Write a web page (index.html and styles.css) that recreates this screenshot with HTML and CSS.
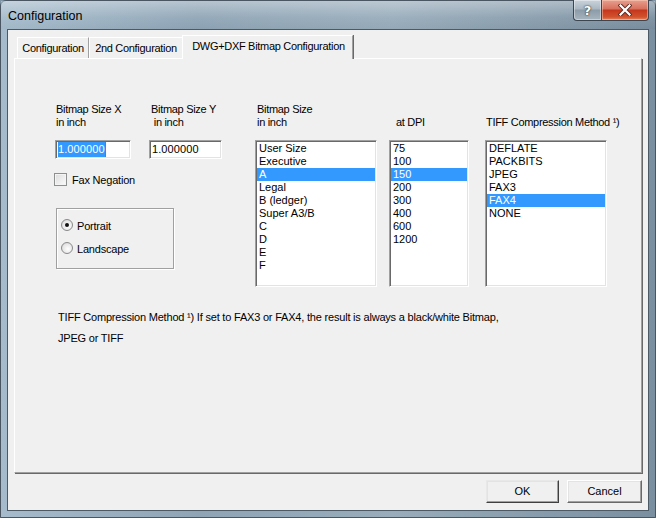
FILE: index.html
```html
<!DOCTYPE html>
<html>
<head>
<meta charset="utf-8">
<link rel="stylesheet" href="styles.css">
</head>
<body>
<div class="window">
  <div class="titlebar">
    <span class="title">Configuration</span>
    <div class="caption-btns">
      <div class="cbtn help">?</div>
      <div class="cbtn close">
        <svg width="14" height="12" viewBox="0 0 14 12">
          <path d="M2.5 1.5 L11.5 10.5 M11.5 1.5 L2.5 10.5" stroke="#5a2a22" stroke-width="4" stroke-linecap="square" fill="none"/>
          <path d="M2.5 1.5 L11.5 10.5 M11.5 1.5 L2.5 10.5" stroke="#ffffff" stroke-width="2.2" stroke-linecap="square" fill="none"/>
        </svg>
      </div>
    </div>
  </div>
  <div class="frame">
    <div class="client">
      <div class="tabs">
        <div class="tab t1">Configuration</div>
        <div class="tab t2">2nd Configuration</div>
        <div class="tab active">DWG+DXF Bitmap Configuration</div>
      </div>
      <div class="panel">
        <div class="panel-top">
          <div class="left">
            <div class="fields">
              <div class="field fx">
                <div class="hdr">Bitmap Size X<br>in inch</div>
                <div class="input"><span class="seltext">1.000000</span><span class="caret"></span></div>
              </div>
              <div class="field fy">
                <div class="hdr">Bitmap Size Y<br>&nbsp;in inch</div>
                <div class="input">1.000000</div>
              </div>
            </div>
            <div class="check-row">
              <span class="checkbox"></span>
              <span class="check-label">Fax Negation</span>
            </div>
            <div class="group">
              <div class="radio-row"><span class="radio checked"></span><span>Portrait</span></div>
              <div class="radio-row"><span class="radio"></span><span>Landscape</span></div>
            </div>
          </div>
          <div class="lists">
            <div class="lcol lc1">
              <div class="hdr lh1">Bitmap Size<br>in inch</div>
              <div class="listbox">
                <div class="item">User Size</div>
                <div class="item">Executive</div>
                <div class="item selected">A</div>
                <div class="item">Legal</div>
                <div class="item">B (ledger)</div>
                <div class="item">Super A3/B</div>
                <div class="item">C</div>
                <div class="item">D</div>
                <div class="item">E</div>
                <div class="item">F</div>
              </div>
            </div>
            <div class="lcol lc2">
              <div class="hdr lh2">at DPI</div>
              <div class="listbox">
                <div class="item">75</div>
                <div class="item">100</div>
                <div class="item selected">150</div>
                <div class="item">200</div>
                <div class="item">300</div>
                <div class="item">400</div>
                <div class="item">600</div>
                <div class="item">1200</div>
              </div>
            </div>
            <div class="lcol lc3">
              <div class="hdr lh3">TIFF Compression Method ¹)</div>
              <div class="listbox">
                <div class="item">DEFLATE</div>
                <div class="item">PACKBITS</div>
                <div class="item">JPEG</div>
                <div class="item">FAX3</div>
                <div class="item selected">FAX4</div>
                <div class="item">NONE</div>
              </div>
            </div>
          </div>
        </div>
        <p class="note">TIFF Compression Method ¹) If set to FAX3 or FAX4, the result is always a black/white Bitmap,<br>JPEG or TIFF</p>
      </div>
      <div class="buttons">
        <div class="btn ok">OK</div>
        <div class="btn cancel">Cancel</div>
      </div>
    </div>
  </div>
</div>
</body>
</html>
```
FILE: styles.css
```css
* { box-sizing: border-box; }
html, body { margin: 0; padding: 0; }
body {
  width: 656px;
  height: 518px;
  overflow: hidden;
  font-family: "Liberation Sans", Arial, sans-serif;
  font-size: 11px;
  color: #000;
  background: #7f95a6;
}
.window {
  width: 656px;
  height: 518px;
  display: flex;
  flex-direction: column;
  background: linear-gradient(to right, #a6bccc 0%, #8fa5b6 30%, #98acbb 60%, #7a8fa0 100%);
  border: 1px solid #4a5763;
  border-radius: 6px 6px 0 0;
}
.titlebar {
  height: 28px;
  display: flex;
  align-items: flex-start;
  justify-content: space-between;
  background: linear-gradient(to bottom, rgba(255,255,255,0.35), rgba(255,255,255,0.05) 60%, rgba(0,0,0,0.02));
}
.title {
  margin: 7px 0 0 7px;
  font-size: 12.5px;
  line-height: 16px;
  color: #000;
}
.caption-btns {
  display: flex;
  margin-right: 6px;
  margin-top: -1px;
}
.cbtn {
  height: 21px;
  display: flex;
  align-items: center;
  justify-content: center;
  border: 1px solid #3b4650;
  border-top: none;
}
.help {
  width: 28px;
  border-radius: 0 0 0 4px;
  border-right: none;
  background: linear-gradient(to bottom, #c9d3dc 0%, #aab7c2 45%, #8c9ba8 50%, #a7b5c0 100%);
  color: #fff;
  font-family: "DejaVu Sans", sans-serif;
  font-weight: bold;
  font-size: 13px;
  text-shadow: 0 0 2px #333, 0 0 1px #333;
  box-shadow: inset 0 0 0 1px rgba(255,255,255,0.4);
}
.close {
  width: 48px;
  border-radius: 0 0 4px 0;
  background: linear-gradient(to bottom, #e8a090 0%, #d7705c 45%, #c4361c 50%, #d2522e 85%, #e4865f 100%);
  box-shadow: inset 0 0 0 1px rgba(255,220,200,0.45);
}
.frame {
  flex: 1;
  padding: 0 6px 6px 6px;
  display: flex;
}
.client {
  width: 642px;
  height: 482px;
  background: #f0f0f0;
  border: 1px solid #4c5a66;
  padding: 5px 6px 0 6px;
  display: flex;
  flex-direction: column;
}
.tabs {
  display: flex;
  align-items: flex-end;
  height: 23px;
  padding-left: 3px;
  position: relative;
  z-index: 2;
}
.tab {
  height: 21px;
  line-height: 19px;
  text-align: center;
  letter-spacing: -0.3px;
  background: #f0f0f0;
  border-top: 1px solid #fff;
  border-left: 1px solid #fff;
  border-right: 1px solid #a0a0a0;
  box-shadow: 1px 0 0 #696969;
  padding-top: 1px;
}
.t1 { width: 72px; }
.t2 { width: 94px; }
.active {
  width: 171px;
  height: 24px;
  margin-left: -1px;
  margin-bottom: -1px;
  line-height: 20px;
  padding-top: 0;
  padding-left: 2px;
  position: relative;
  z-index: 3;
}
.panel {
  height: 415px;
  border-top: 1px solid #fff;
  border-left: 1px solid #fff;
  border-right: 1px solid #a0a0a0;
  border-bottom: 1px solid #a0a0a0;
  box-shadow: 1px 1px 0 #696969;
  padding: 44px 0 0 40px;
  position: relative;
  z-index: 1;
}
.panel-top {
  display: flex;
  align-items: flex-start;
}
.left {
  width: 167px;
  display: flex;
  flex-direction: column;
}
.fields {
  display: flex;
  gap: 18px;
}
.fx { width: 76px; }
.fy { width: 73px; }
.hdr {
  height: 37px;
  line-height: 13px;
  letter-spacing: -0.3px;
  white-space: nowrap;
}
.fx .hdr { padding-left: 1px; }
.fy .hdr { padding-left: 2px; }
.input {
  height: 19px;
  background: #fff;
  border: 1px solid;
  border-color: #a0a0a0 #fff #fff #a0a0a0;
  box-shadow: inset 1px 1px 0 #696969, inset -1px -1px 0 #e3e3e3;
  padding: 2px 0 0 2px;
  line-height: 13px;
  letter-spacing: 0.1px;
  display: flex;
  align-items: flex-start;
}
.seltext {
  background: #3399ff;
  color: #fff;
  line-height: 15px;
  margin-top: -1px;
}
.caret {
  width: 1px;
  height: 15px;
  margin-top: -1px;
  background: #cc6600;
}
.check-row {
  display: flex;
  align-items: center;
  height: 14px;
  margin-top: 13px;
  margin-left: -1px;
}
.checkbox {
  width: 13px;
  height: 13px;
  border: 1px solid #8e8f8f;
  background: linear-gradient(135deg, #dcdcdc, #fbfbfb);
  box-shadow: inset 0 0 0 1px #f4f4f4;
}
.check-label {
  margin-left: 5px;
  padding-top: 2px;
  letter-spacing: -0.2px;
}
.group {
  width: 118px;
  height: 61px;
  margin-top: 22px;
  margin-left: 1px;
  border: 1px solid #a0a0a0;
  box-shadow: 1px 1px 0 #fff, inset 1px 1px 0 #fff;
  padding: 10px 0 0 4px;
  display: flex;
  flex-direction: column;
  gap: 11px;
}
.radio-row {
  display: flex;
  align-items: center;
  height: 12px;
  letter-spacing: -0.2px;
}
.radio-row span:last-child { margin-left: 4px; padding-top: 1px; }
.radio {
  width: 12px;
  height: 12px;
  border-radius: 50%;
  border: 1px solid #8a8a8a;
  background: radial-gradient(circle at 60% 60%, #ffffff 0%, #e6e6e6 60%, #c8c8c8 100%);
  position: relative;
}
.radio.checked::after {
  content: "";
  position: absolute;
  left: 3px;
  top: 3px;
  width: 4px;
  height: 4px;
  border-radius: 50%;
  background: #111;
}
.lists {
  display: flex;
  margin-left: 33px;
}
.lc1 { width: 122px; }
.lc2 { width: 80px; margin-left: 12px; }
.lc3 { width: 122px; margin-left: 16px; }
.lh1 { padding-left: 2px; }
.lh2 { padding: 13px 0 0 7px; }
.lh3 { padding: 13px 0 0 1px; }
.listbox {
  height: 147px;
  background: #fff;
  border: 1px solid;
  border-color: #a0a0a0 #fff #fff #a0a0a0;
  box-shadow: inset 1px 1px 0 #696969, inset -1px -1px 0 #e3e3e3;
  padding: 1px 1px 1px 1px;
}
.item {
  height: 13px;
  line-height: 13px;
  padding-left: 2px;
  white-space: nowrap;
}
.item.selected {
  background: #3399ff;
  color: #fff;
}
.note {
  margin: 20px 0 0 3px;
  line-height: 21px;
  letter-spacing: -0.2px;
  white-space: nowrap;
}
.buttons {
  display: flex;
  justify-content: flex-end;
  gap: 8px;
  margin-top: 7px;
}
.btn {
  height: 23px;
  line-height: 21px;
  text-align: center;
  background: #f0f0f0;
  border: 1px solid;
  border-color: #fff #696969 #696969 #fff;
  box-shadow: inset -1px -1px 0 #a0a0a0, inset 1px 1px 0 #e3e3e3;
}
.ok { width: 73px; border-color: #e8e8e8 #404040 #404040 #e8e8e8; }
.cancel { width: 75px; }
```
